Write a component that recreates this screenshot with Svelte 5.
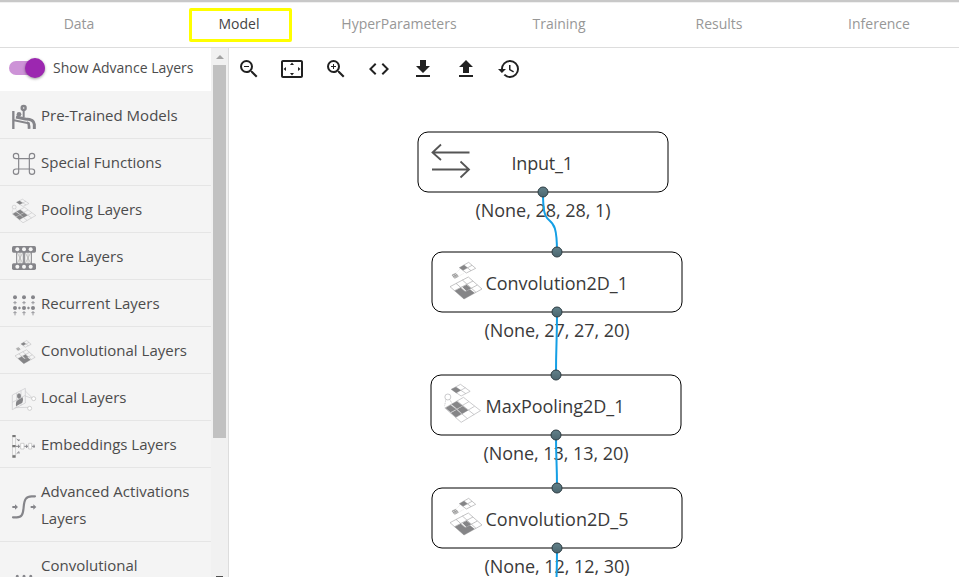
<script>
  const tabs = ['Data', 'Model', 'HyperParameters', 'Training', 'Results', 'Inference'];

  const magnifier =
    'M15.5 14h-.79l-.28-.27A6.471 6.471 0 0 0 16 9.5 6.5 6.5 0 1 0 9.5 16c1.61 0 3.09-.59 4.23-1.57l.27.28v.79l5 4.99L20.49 19l-4.99-5zm-6 0C7.01 14 5 11.99 5 9.5S7.01 5 9.5 5 14 7.01 14 9.5 11.99 14 9.5 14z';
  const tools = [
    { name: 'Zoom out', d: magnifier + 'M7 9h5v1H7z' },
    { name: 'Fit', d: 'M12.01 5.5L10 8h4l-1.99-2.5zM18 10v4l2.5-1.99L18 10zM6 10l-2.5 2.01L6 14v-4zm8 6h-4l2.01 2.5L14 16zm7-13H3c-1.1 0-2 .9-2 2v14c0 1.1.9 2 2 2h18c1.1 0 2-.9 2-2V5c0-1.1-.9-2-2-2zm0 16.01H3V4.99h18v14.02z' },
    { name: 'Zoom in', d: magnifier + 'M12 10h-2v2H9v-2H7V9h2V7h1v2h2v1z' },
    { name: 'Code', d: 'M9.4 16.6L4.8 12l4.6-4.6L8 6l-6 6 6 6 1.4-1.4zm5.2 0l4.6-4.6-4.6-4.6L16 6l6 6-6 6-1.4-1.4z' },
    { name: 'Download', d: 'M19 9h-4V3H9v6H5l7 7 7-7zM5 18v2h14v-2H5z' },
    { name: 'Upload', d: 'M9 16h6v-6h4l-7-7-7 7h4zm-4 2h14v2H5z' },
    { name: 'History', d: 'M13 3a9 9 0 0 0-9 9H1l3.89 3.89.07.14L9 12H6c0-3.87 3.13-7 7-7s7 3.13 7 7-3.13 7-7 7c-1.93 0-3.68-.79-4.94-2.06l-1.42 1.42A8.954 8.954 0 0 0 13 21a9 9 0 0 0 0-18zm-1 5v5l4.28 2.54.72-1.21-3.5-2.08V8H12z' }
  ];

  const groups = [
    { label: 'Pre-Trained Models', icon: 'bench' },
    { label: 'Special Functions', icon: 'command' },
    { label: 'Pooling Layers', icon: 'pool' },
    { label: 'Core Layers', icon: 'core' },
    { label: 'Recurrent Layers', icon: 'recurrent' },
    { label: 'Convolutional Layers', icon: 'conv' },
    { label: 'Local Layers', icon: 'local' },
    { label: 'Embeddings Layers', icon: 'embed' },
    { label: 'Advanced Activations Layers', icon: 'sigmoid' },
    { label: 'Convolutional Recurrent Layers', icon: 'convrec' }
  ];

  const nodes = [
    { x: 418, y: 132, label: 'Input_1', tx: 511.5, tw: 61.5, shape: '(None, 28, 28, 1)', sx: 475.5, sw: 135, icon: 'swap' },
    { x: 432, y: 252, label: 'Convolution2D_1', tx: 485.5, tw: 142.5, shape: '(None, 27, 27, 20)', sx: 484.5, sw: 145, icon: 'conv', inPort: true },
    { x: 431, y: 375, label: 'MaxPooling2D_1', tx: 485.5, tw: 139, shape: '(None, 13, 13, 20)', sx: 483.5, sw: 145, icon: 'pool', inPort: true },
    { x: 432, y: 488, label: 'Convolution2D_5', tx: 485.5, tw: 143, shape: '(None, 12, 12, 30)', sx: 484.5, sw: 145, icon: 'conv', inPort: true }
  ];

  const wires = [
    'M543 192C543 209 544 216 549 220S557 228 557 252',
    'M557 312C557 343 556 343 556 375',
    'M556 435C556 461 557 461 557 488',
    'M557 548C557 579 556 579 556 611'
  ];
</script>

{#snippet conv()}
  <g fill="none" stroke="#a6a6a8" stroke-width="2">
    <path d="M28 17L56 1 77 19 49 33zM42 9L63 26M39 25L66 10" />
    <path d="M0 74L55 45 96 81 42 111zM18 64L60 101M37 54L78 91M14 86L69 57M28 98L82 69" />
  </g>
  <path fill="#858587" d="M28 17L42 9 52 17 39 25zM18 85L32 77 46 89 60 82 74 93 42 111 14 86zM37 75L50 68 63 79 49 87z" />
  <path d="M6 39L17 34 25 43 14 49zM11 36L20 46M9 45L22 38" fill="#ccc" stroke="#777" stroke-width="1.5" />
  <path d="M17 34L30 21M25 43L42 34" stroke="#bbb" stroke-width="1" stroke-dasharray="3 2" />
{/snippet}

{#snippet pool()}
  <g fill="none" stroke="#b1b1b3" stroke-width="2">
    <path d="M20 16L48 1 77 22 50 36zM34 9L64 29M35 27L63 11" />
    <circle cx="10" cy="39" r="9" />
    <path d="M4 47L0 67M16 47L24 61" stroke-dasharray="3 2" />
    <path d="M1 72L57 40 108 80 50 115zM19 62L69 104M38 51L89 92M17 86L73 53M33 101L90 67" />
  </g>
  <path fill="#858587" d="M20 16L34 9 49 19 35 27zM3 72L18 63 35 76 18 85zM21 61L37 52 54 65 37 74zM19 87L36 77 51 90 34 100zM38 76L55 66 71 79 53 89z" />
{/snippet}

{#snippet groupIcon(kind)}
  <svg class="group-icon" viewBox="0 0 72 72" aria-hidden="true">
    {#if kind === 'bench'}
      <g fill="none" stroke="#85858a">
        <path d="M4 18V72" stroke-width="7" />
        <circle cx="35" cy="9" r="6" stroke-width="7" />
        <path d="M35 15V36" stroke-width="6" />
        <path d="M6 46L50 55V71" stroke-width="6" />
        <path d="M12 36L40 42Q66 43 67 58V72" stroke-width="9" />
        <path d="M45 52Q52 53 52 71" stroke-width="7" />
      </g>
      <circle cx="21" cy="28" r="7" fill="#85858a" />
    {:else if kind === 'command'}
      <path d="M20 12A8 8 0 1 0 12 20H60A8 8 0 1 0 52 12V59A8 8 0 1 0 60 51H12A8 8 0 1 0 20 59Z" fill="none" stroke="#85858a" stroke-width="3.5" />
    {:else if kind === 'pool'}
      <g transform="scale(.66 .62)">{@render pool()}</g>
    {:else if kind === 'conv'}
      <g transform="translate(9 1) scale(.63)">{@render conv()}</g>
    {:else if kind === 'core'}
      <path d="M15 18L33 54M15 54L33 18M39 18L57 54M39 54L57 18M24 18V54M48 18V54" stroke="#aaa" stroke-width="2" />
      <path d="M14 18V54M34 18V54M38 18V54M58 18V54" stroke="#85858a" stroke-width="3" />
      <rect width="72" height="20" rx="5" fill="#85858a" />
      <rect y="52" width="72" height="20" rx="5" fill="#85858a" />
      {#each [16, 36, 56] as x}
        <circle cx={x} cy="10" r="6" fill="#f5f5f5" />
        <circle cx={x} cy="62" r="6" fill="#f5f5f5" />
      {/each}
    {:else if kind === 'recurrent' || kind === 'convrec'}
      <g transform={kind === 'convrec' ? 'translate(9 12) scale(.75)' : undefined}>
        <path d="M18 45H27M45 45H54M22 41V49M49 41V49" stroke="#85858a" stroke-width="3" />
        {#each [9, 36, 63] as x}
          <path d="M{x} 24V34M{x - 5} 29H{x + 5}M{x} 54V67M{x - 5} 59H{x + 5}" stroke="#9a9a9e" stroke-width="3" />
          <circle cx={x} cy="13" r="6" fill="#85858a" />
          <circle cx={x} cy="45" r="6" fill="#85858a" />
        {/each}
      </g>
    {:else if kind === 'local'}
      <path d="M1 24L40 4V48L1 68zM1 46L40 25M14 18V62M27 11V55M40 12L60 32M40 27L60 34M8 62L48 61" fill="none" stroke="#c9c9cb" stroke-width="2" />
      <path d="M12 58Q10 42 19 38L32 31Q35 40 31 47Z" fill="#858588" />
      <ellipse cx="21" cy="27" rx="6" ry="8" fill="#858588" />
      <circle cx="65" cy="35" r="6" fill="#fff" stroke="#bbb" stroke-width="2" />
      <circle cx="53" cy="64" r="6" fill="#fff" stroke="#bbb" stroke-width="2" />
    {:else if kind === 'embed'}
      <path d="M2 9H10V64H2zM26 28H36V45H26zM50 28H59V45H50z" fill="#fff" stroke="#bbb" stroke-width="2" />
      <path d="M1 3H11V9H1zM1 33H11V40H1zM1 64H11V71H1z" fill="#777" />
      <path d="M12 37H24M37 37H48M60 37H69M20 32V42M44 32V42M66 32V42M14 15L21 21V15M14 59L21 53V59" fill="none" stroke="#85858a" stroke-width="3" />
    {:else if kind === 'sigmoid'}
      <path d="M3 67H14C29 67 33 60 35 36S43 4 59 4H69" fill="none" stroke="#85858a" stroke-width="6.5" stroke-linecap="round" />
      <path d="M1 33H9V28L18 36 9 44V39H1zM56 33H64V28L73 36 64 44V39H56z" fill="#85858a" />
    {/if}
  </svg>
{/snippet}

<div class="app">
  <nav>
    {#each tabs as tab}
      <div class="tab" class:active={tab === 'Model'}><span>{tab}</span></div>
    {/each}
  </nav>

  <div class="body">
    <aside>
      <div class="list">
        <div class="toggle-row">
          <span class="switch"><span class="knob"></span></span>
          <span class="toggle-label">Show Advance Layers</span>
        </div>
        {#each groups as group}
          <div class="group">
            {@render groupIcon(group.icon)}
            <span>{group.label}</span>
          </div>
        {/each}
      </div>
      <div class="scrollbar">
        <i class="up"></i>
        <div class="thumb"></div>
        <i class="down"></i>
      </div>
    </aside>

    <main>
      <div class="toolbar">
        {#each tools as tool}
          <svg viewBox="0 0 24 24" aria-label={tool.name}><path d={tool.d} /></svg>
        {/each}
      </div>
      <svg class="graph" viewBox="229 90 730 487">
        <defs>
          <linearGradient id="port" x2="0" y2="1">
            <stop offset="0" stop-color="#62818a" />
            <stop offset="1" stop-color="#4b666f" />
          </linearGradient>
        </defs>
        {#each nodes as n}
          <rect x={n.x} y={n.y} width="250" height="60" rx="10" fill="#fff" stroke="#000" />
          {#if n.icon === 'swap'}
            <path d="M469.500 152.500H433M441 144.500L432.500 152.500 441 160M432 169.500H468.500M460.500 161.500L469 169.500 460.500 177.500" fill="none" stroke="#555" stroke-width="1.800" />
          {:else if n.icon === 'conv'}
            <g transform="translate({n.x + 18} {n.y + 10}) scale(.3333)">{@render conv()}</g>
          {:else}
            <g transform="translate({n.x + 13.5} {n.y + 9}) scale(.3333)">{@render pool()}</g>
          {/if}
          <text x={n.tx} y={n.y + 38} textLength={n.tw}>{n.label}</text>
          <text x={n.sx} y={n.y + 85} textLength={n.sw}>{n.shape}</text>
        {/each}
        {#each wires as d}
          <path {d} fill="none" stroke="#149fe5" stroke-width="2" />
        {/each}
        {#each nodes as n}
          {#if n.inPort}<circle class="port" cx={n.x + 125} cy={n.y} r="5" />{/if}
          <circle class="port" cx={n.x + 125} cy={n.y + 60} r="5" />
        {/each}
      </svg>
    </main>
  </div>
</div>

<style>
  :global(body) {
    margin: 0;
    overflow: hidden;
  }
  .app {
    width: 959px;
    height: 577px;
    display: flex;
    flex-direction: column;
    overflow: hidden;
    background: #fff;
    font-family: 'Open Sans', 'Noto Sans', sans-serif;
    font-weight: 400;
    color: #4c4c4c;
    box-sizing: border-box;
  }
  nav {
    height: 48px;
    flex: none;
    box-sizing: border-box;
    display: flex;
    align-items: center;
    border-top: 2px solid #c8c8c8;
    border-bottom: 1px solid #ddd;
    box-shadow: inset 0 1px 0 #f0f0f0;
    padding-top: 1px;
  }
  .tab {
    width: 158px;
    flex: none;
    margin-right: 2px;
    display: flex;
    justify-content: center;
    font-size: 14px;
    line-height: 28px;
    color: #979797;
    padding-bottom: 2px;
  }
  .tab.active {
    width: 94px;
    margin: -1px 28px 0 29px;
    padding: 0 3px 0 0;
    border: 3px solid #ff0;
    border-radius: 2px;
    color: #444;
  }
  .active span {
    margin-top: -1px;
    margin-bottom: 1px;
  }
  .body {
    flex: 1;
    min-height: 0;
    display: flex;
  }
  aside {
    width: 228px;
    flex: none;
    display: flex;
    border-right: 1px solid #ddd;
    overflow: hidden;
  }
  .list {
    width: 211px;
    flex: none;
    font-size: 15px;
  }
  .toggle-row {
    height: 44px;
    display: flex;
    align-items: center;
    gap: 8px;
    padding-left: 9px;
    box-sizing: border-box;
    padding-bottom: 3px;
    border-bottom: 1px solid #f4f4f4;
    font-size: 14px;
  }
  .toggle-label {
    margin-top: -1px;
    padding-bottom: 1px;
    white-space: nowrap;
  }
  .switch {
    width: 36px;
    height: 14px;
    border-radius: 7px;
    background: #cd93d7;
    display: flex;
    align-items: center;
    justify-content: flex-end;
  }
  .knob {
    width: 20px;
    height: 20px;
    flex: none;
    border-radius: 50%;
    background: #9c27b0;
    box-shadow: 0 1px 3px rgba(0, 0, 0, 0.4);
  }
  .group {
    min-height: 47px;
    box-sizing: border-box;
    padding: 10px 12px 10px 12px;
    display: flex;
    align-items: center;
    gap: 5px;
    background: #f4f4f4;
    border-bottom: 1px solid #e5e5e5;
    line-height: 27px;
  }
  .group span {
    margin: 0 0 -1px;
  }
  .group-icon {
    width: 24px;
    height: 24px;
    flex: none;
    overflow: visible;
    margin: 2px 0 -2px;
  }
  .scrollbar {
    width: 17px;
    flex: none;
    background: #f1f1f1;
    display: flex;
    flex-direction: column;
    align-items: center;
  }
  .up {
    border: 4px solid transparent;
    border-top: 0;
    border-bottom-color: #a3a3a3;
    margin-top: 7px;
  }
  .thumb {
    width: 13px;
    height: 373px;
    margin-top: 6px;
    background: #c1c1c1;
  }
  .down {
    width: 7px;
    height: 1px;
    margin-top: 138px;
    background: #505050;
  }
  main {
    flex: 1;
    min-width: 0;
    display: flex;
    flex-direction: column;
  }
  .toolbar {
    height: 42px;
    flex: none;
    box-sizing: border-box;
    padding: 9px 0 0 8px;
    display: flex;
    gap: 19.4px;
  }
  .toolbar svg {
    width: 24px;
    height: 24px;
    fill: #212121;
  }
  .graph {
    width: 730px;
    height: 487px;
    display: block;
  }
  .graph text {
    font-size: 18px;
    fill: #3a3a3a;
  }
  .port {
    fill: url(#port);
    stroke: #2d3c42;
  }
</style>
